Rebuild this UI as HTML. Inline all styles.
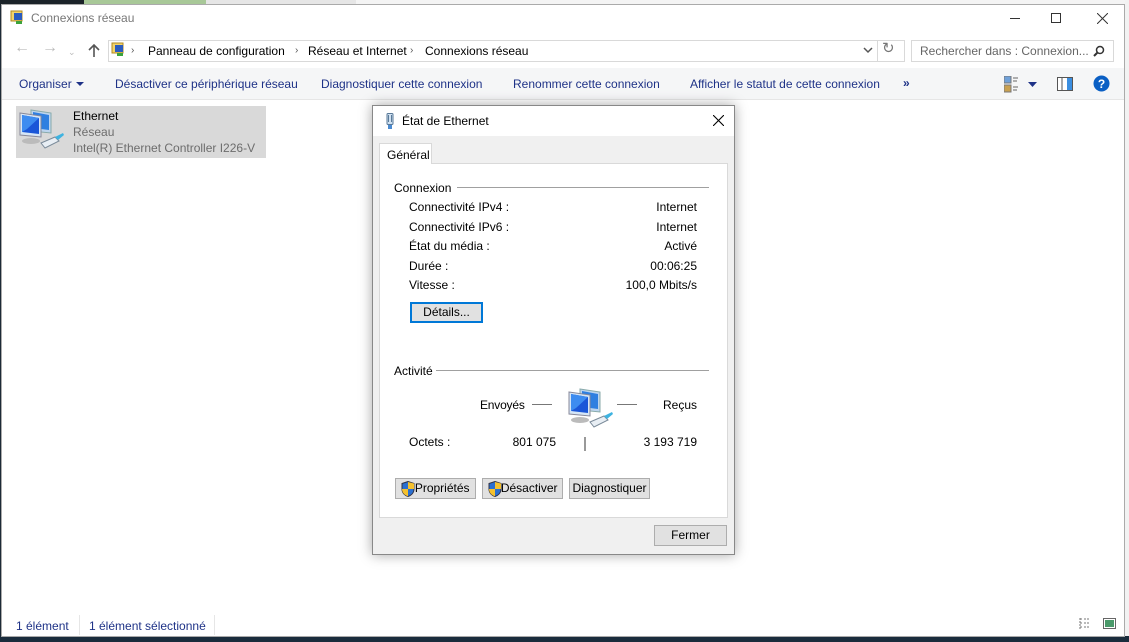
<!DOCTYPE html>
<html><head><meta charset="utf-8"><style>
*{margin:0;padding:0;box-sizing:border-box}
body{width:1129px;height:642px;overflow:hidden;position:relative;font-family:"Segoe UI","Liberation Sans","DejaVu Sans",sans-serif;font-size:12px;line-height:16px;color:#000;background:#1d2a36}
.a{position:absolute;white-space:nowrap}
.win{position:absolute;left:1px;top:4px;width:1124px;height:633px;background:#fff;border:1px solid #aaa}
.tb{color:#1e3287}
.dlg{position:absolute;left:372px;top:105px;width:363px;height:450px;background:#f0f0f0;border:1px solid #888;box-shadow:0 0 12px rgba(0,0,0,.35)}
.btn{position:absolute;background:#e1e1e1;border:1px solid #adadad;height:21px;text-align:center;line-height:19px;font-size:12px}
</style></head><body>
<div class="a" style="left:0;top:0;width:84px;height:5px;background:#1b2329"></div>
<div class="a" style="left:84px;top:0;width:122px;height:5px;background:#a8c898"></div>
<div class="a" style="left:206px;top:0;width:150px;height:5px;background:#e6e6e6"></div>
<div class="a" style="left:356px;top:0;width:773px;height:5px;background:#f4f4f4"></div>
<div class="a" style="left:1125px;top:0;width:4px;height:642px;background:#f2f2f2"></div>
<div class="a" style="left:0;top:636px;width:1129px;height:6px;background:#1a2c3c"></div>

<div class="win"></div>
<svg class="a" style="left:10px;top:10px" width="16" height="16" viewBox="0 0 16 16"><rect x="1" y="1" width="11" height="10" fill="#f2d36b" stroke="#b08a20"/><rect x="4" y="3" width="8" height="7" fill="#2a5bbf"/><rect x="6" y="11" width="6" height="3" fill="#3ba33b"/></svg>
<div class="a" style="left:31px;top:10px;color:#777">Connexions réseau</div>
<div class="a" style="left:1010px;top:18px;width:10px;height:1px;background:#333"></div>
<div class="a" style="left:1051px;top:13px;width:10px;height:10px;border:1px solid #333"></div>
<svg class="a" style="left:1097px;top:13px" width="11" height="11"><path d="M0 0L11 11M11 0L0 11" stroke="#333"/></svg>
<div class="a" style="left:14px;top:40px;color:#bbb;font-size:16px">←</div>
<div class="a" style="left:42px;top:40px;color:#bbb;font-size:16px">→</div>
<div class="a" style="left:68px;top:44px;color:#bbb;font-size:9px">⌄</div>
<svg class="a" style="left:88px;top:43px" width="12" height="14"><path d="M6 14V2M1 7L6 2L11 7" stroke="#555" stroke-width="1.6" fill="none"/></svg>
<div class="a" style="left:108px;top:40px;width:797px;height:22px;border:1px solid #d9d9d9"></div>
<div class="a" style="left:877px;top:40px;width:1px;height:22px;background:#d9d9d9"></div>
<svg class="a" style="left:111px;top:42px" width="16" height="16" viewBox="0 0 16 16"><rect x="1" y="1" width="11" height="10" fill="#f2d36b" stroke="#b08a20"/><rect x="4" y="3" width="8" height="7" fill="#2a5bbf"/><rect x="6" y="11" width="6" height="3" fill="#3ba33b"/></svg>
<div class="a" style="left:131px;top:43px;color:#555;font-size:10px">›</div>
<div class="a" style="left:148px;top:43px">Panneau de configuration</div>
<div class="a" style="left:295px;top:43px;color:#555;font-size:10px">›</div>
<div class="a" style="left:308px;top:43px">Réseau et Internet</div>
<div class="a" style="left:410px;top:43px;color:#555;font-size:10px">›</div>
<div class="a" style="left:425px;top:43px">Connexions réseau</div>
<svg class="a" style="left:863px;top:47px" width="10" height="7"><path d="M1 1L5 5L9 1" stroke="#555" stroke-width="1.5" fill="none"/></svg>
<div class="a" style="left:882px;top:41px;color:#777;font-size:15px">↻</div>
<div class="a" style="left:911px;top:40px;width:203px;height:22px;border:1px solid #d9d9d9"></div>
<div class="a" style="left:920px;top:43px;color:#666">Rechercher dans : Connexion...</div>
<svg class="a" style="left:1093px;top:45px" width="12" height="12"><circle cx="7" cy="5" r="3.5" stroke="#333" stroke-width="1.5" fill="none"/><path d="M4.5 7.5L1 11" stroke="#333" stroke-width="2"/></svg>
<div class="a" style="left:2px;top:68px;width:1122px;height:32px;background:#f5f6f7;border-bottom:1px solid #e6e6e6"></div>
<div class="a tb" style="left:19px;top:76px">Organiser</div>
<svg class="a" style="left:76px;top:82px" width="8" height="5"><path d="M0 0H8L4 4Z" fill="#1e3287"/></svg>
<div class="a tb" style="left:115px;top:76px">Désactiver ce périphérique réseau</div>
<div class="a tb" style="left:321px;top:76px">Diagnostiquer cette connexion</div>
<div class="a tb" style="left:513px;top:76px">Renommer cette connexion</div>
<div class="a tb" style="left:690px;top:76px">Afficher le statut de cette connexion</div>
<div class="a tb" style="left:903px;top:75px;font-weight:bold">»</div>
<svg class="a" style="left:1004px;top:76px" width="16" height="17"><rect x="0" y="0" width="7" height="7" fill="#6fa0d8" stroke="#777"/><rect x="0" y="9" width="7" height="7" fill="#c8a050" stroke="#777"/><path d="M9 2H14M9 5H13M9 11H14M9 14H13" stroke="#666"/></svg>
<svg class="a" style="left:1028px;top:82px" width="9" height="5"><path d="M0 0H9L4.5 5Z" fill="#1e3287"/></svg>
<svg class="a" style="left:1057px;top:77px" width="16" height="14"><rect x="0.5" y="0.5" width="15" height="13" fill="#fff" stroke="#555"/><rect x="10" y="1" width="5" height="12" fill="#3b8ee0"/><path d="M5 1V13" stroke="#555"/></svg>
<svg class="a" style="left:1093px;top:75px" width="17" height="17"><circle cx="8.5" cy="8.5" r="8" fill="#0a5fc4"/><text x="8.5" y="13" font-size="12" font-weight="bold" fill="#fff" text-anchor="middle" font-family="Liberation Sans">?</text></svg>
<div class="a" style="left:16px;top:106px;width:250px;height:52px;background:#d9d9d9"></div>
<svg class="a" style="left:17px;top:107px" width="48" height="48" viewBox="0 0 48 48">
<path d="M14 3L34 6V26L14 24Z" fill="#bcd4ee" stroke="#8aa"/><path d="M16 5L32 8V23L16 21Z" fill="#2f7fe0"/>
<path d="M3 6L24 9V30L3 28Z" fill="#d6e6f6" stroke="#889"/><path d="M5 8L22 11V27L5 25Z" fill="#1a56d8"/><path d="M5 8L22 11L10 22L5 25Z" fill="#3d8cf0"/>
<ellipse cx="14" cy="34" rx="9" ry="3" fill="#bbb"/>
<path d="M24 36L38 30L42 34L28 41Z" fill="#e8eef4" stroke="#7a8a99"/><path d="M38 30L46 26L47 28L41 33Z" fill="#3fb3e0"/>
</svg>
<div class="a" style="left:73px;top:108px">Ethernet</div>
<div class="a" style="left:73px;top:124px;color:#6d6d6d">Réseau</div>
<div class="a" style="left:73px;top:140px;color:#6d6d6d">Intel(R) Ethernet Controller I226-V</div>
<div class="a" style="left:16px;top:618px;color:#1e3287">1 élément</div>
<div class="a" style="left:79px;top:615px;width:1px;height:20px;background:#e6e6e6"></div>
<div class="a" style="left:89px;top:618px;color:#1e3287">1 élément sélectionné</div>
<div class="a" style="left:214px;top:615px;width:1px;height:20px;background:#e6e6e6"></div>
<svg class="a" style="left:1079px;top:617px" width="40" height="13"><path d="M1 1V12M1 2H3M1 6H3M1 10H3M5 2H11M5 6H11M5 10H11" stroke="#777" stroke-dasharray="2 1"/><rect x="24.5" y="1.5" width="12" height="10" fill="#fff" stroke="#666"/><rect x="26" y="3" width="9" height="7" fill="#4a9a6a"/></svg>

<div class="dlg">
 <div class="a" style="left:0;top:0;width:361px;height:30px;background:#fff"></div>
 <svg class="a" style="left:12px;top:7px" width="10" height="17"><rect x="2" y="0.5" width="6" height="11" rx="1" fill="#cfe0f0" stroke="#5a7a99"/><path d="M3.5 2V9M6.5 2V9" stroke="#5a7a99"/><rect x="3" y="12" width="4" height="4" fill="#4a8ad0"/></svg>
 <div class="a" style="left:29px;top:7px">État de Ethernet</div>
 <svg class="a" style="left:340px;top:9px" width="11" height="11"><path d="M0 0L11 11M11 0L0 11" stroke="#000" stroke-width="1.1"/></svg>
 <div class="a" style="left:6px;top:57px;width:349px;height:355px;background:#fff;border:1px solid #d9d9d9"></div>
 <div class="a" style="left:6px;top:37px;width:53px;height:21px;background:#fff;border:1px solid #d9d9d9;border-bottom:none;padding:3px 0 0 7px">Général</div>
 <div class="a" style="left:21px;top:74px">Connexion</div>
 <div class="a" style="left:84px;top:81px;width:252px;height:1px;background:#a0a0a0"></div>
 <div class="a" style="left:36px;top:93px">Connectivité IPv4 :</div><div class="a" style="right:37px;top:93px">Internet</div>
 <div class="a" style="left:36px;top:113px">Connectivité IPv6 :</div><div class="a" style="right:37px;top:113px">Internet</div>
 <div class="a" style="left:36px;top:132px">État du média :</div><div class="a" style="right:37px;top:132px">Activé</div>
 <div class="a" style="left:36px;top:152px">Durée :</div><div class="a" style="right:37px;top:152px">00:06:25</div>
 <div class="a" style="left:36px;top:171px">Vitesse :</div><div class="a" style="right:37px;top:171px">100,0 Mbits/s</div>
 <div class="btn" style="left:37px;top:196px;width:73px;height:21px;border:2px solid #0078d7;line-height:17px">Détails...</div>
 <div class="a" style="left:21px;top:257px">Activité</div>
 <div class="a" style="left:63px;top:264px;width:273px;height:1px;background:#a0a0a0"></div>
 <div class="a" style="left:107px;top:291px;letter-spacing:-0.2px">Envoyés</div>
 <div class="a" style="left:159px;top:298px;width:20px;height:1px;background:#777"></div>
 <div class="a" style="left:244px;top:298px;width:20px;height:1px;background:#777"></div>
 <div class="a" style="right:37px;top:291px">Reçus</div>
 <svg class="a" style="left:193px;top:280px" width="48" height="48" viewBox="0 0 48 48">
 <path d="M14 3L34 6V26L14 24Z" fill="#bcd4ee" stroke="#8aa"/><path d="M16 5L32 8V23L16 21Z" fill="#2f7fe0"/>
 <path d="M3 6L24 9V30L3 28Z" fill="#d6e6f6" stroke="#889"/><path d="M5 8L22 11V27L5 25Z" fill="#1a56d8"/><path d="M5 8L22 11L10 22L5 25Z" fill="#3d8cf0"/>
 <ellipse cx="14" cy="34" rx="9" ry="3" fill="#bbb"/>
 <path d="M24 36L38 30L42 34L28 41Z" fill="#e8eef4" stroke="#7a8a99"/><path d="M38 30L46 26L47 28L41 33Z" fill="#3fb3e0"/>
 </svg>
 <div class="a" style="left:36px;top:328px">Octets :</div>
 <div class="a" style="right:178px;top:328px">801 075</div>
 <div class="a" style="left:211px;top:331px;width:2px;height:14px;background:#999"></div>
 <div class="a" style="right:37px;top:328px">3 193 719</div>
 <div class="btn" style="left:22px;top:372px;width:81px">&nbsp;&nbsp;&nbsp;&nbsp;Propriétés</div>
 <div class="btn" style="left:109px;top:372px;width:81px">&nbsp;&nbsp;&nbsp;&nbsp;Désactiver</div>
 <svg class="a" style="left:28px;top:375px" width="14" height="16"><path d="M7 0.5L13 2.5V8C13 12 10 14.5 7 15.5C4 14.5 1 12 1 8V2.5Z" fill="#2a6fd1" stroke="#334"/><path d="M7 1V8H13V2.5ZM1 8H7V15.3C4 14.3 1 12 1 8Z" fill="#f5c12e"/></svg>
 <svg class="a" style="left:115px;top:375px" width="14" height="16"><path d="M7 0.5L13 2.5V8C13 12 10 14.5 7 15.5C4 14.5 1 12 1 8V2.5Z" fill="#2a6fd1" stroke="#334"/><path d="M7 1V8H13V2.5ZM1 8H7V15.3C4 14.3 1 12 1 8Z" fill="#f5c12e"/></svg>
 <div class="btn" style="left:196px;top:372px;width:81px">Diagnostiquer</div>
 <div class="btn" style="left:281px;top:419px;width:73px">Fermer</div>
</div>
</body></html>
